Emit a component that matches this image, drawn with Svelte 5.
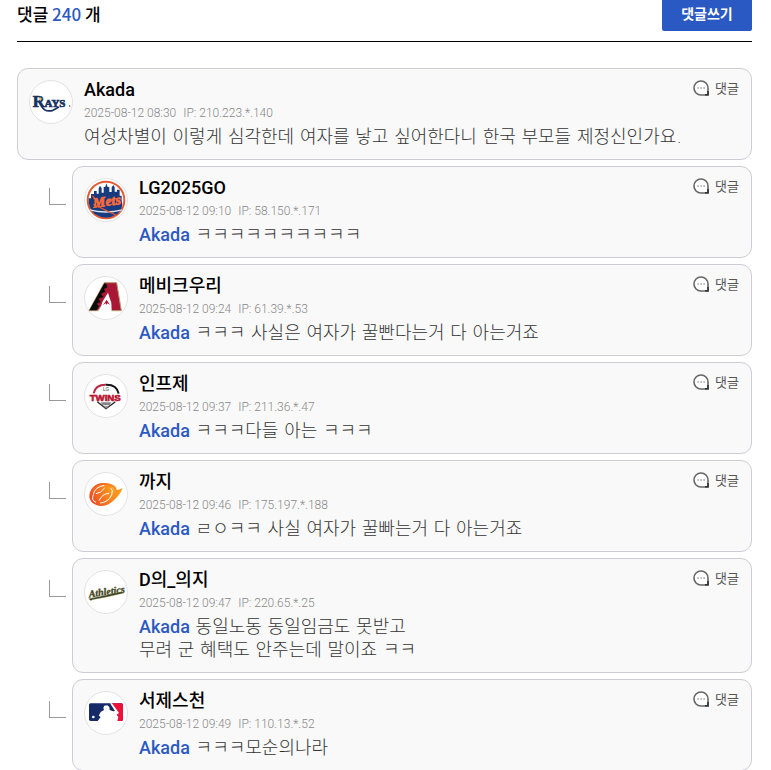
<script lang="ts">
  type Comment = {
    name: string
    date: string
    ip: string
    team: string
    to?: string
    lines: string[]
  }

  const total = 240

  const comments: Comment[] = [
    { name: 'Akada', date: '2025-08-12 08:30', ip: '210.223.*.140', team: 'rays', lines: ['여성차별이 이렇게 심각한데 여자를 낳고 싶어한다니 한국 부모들 제정신인가요.'] },
    { name: 'LG2025GO', date: '2025-08-12 09:10', ip: '58.150.*.171', team: 'mets', to: 'Akada', lines: ['ㅋㅋㅋㅋㅋㅋㅋㅋㅋㅋ'] },
    { name: '메비크우리', date: '2025-08-12 09:24', ip: '61.39.*.53', team: 'dbacks', to: 'Akada', lines: ['ㅋㅋㅋ 사실은 여자가 꿀빤다는거 다 아는거죠'] },
    { name: '인프제', date: '2025-08-12 09:37', ip: '211.36.*.47', team: 'twins', to: 'Akada', lines: ['ㅋㅋㅋ다들 아는 ㅋㅋㅋ'] },
    { name: '까지', date: '2025-08-12 09:46', ip: '175.197.*.188', team: 'ball', to: 'Akada', lines: ['ㄹㅇㅋㅋ 사실 여자가 꿀빠는거 다 아는거죠'] },
    { name: 'D의_의지', date: '2025-08-12 09:47', ip: '220.65.*.25', team: 'athletics', to: 'Akada', lines: ['동일노동 동일임금도 못받고', '무려 군 혜택도 안주는데 말이죠 ㅋㅋ'] },
    { name: '서제스천', date: '2025-08-12 09:49', ip: '110.13.*.52', team: 'mlb', to: 'Akada', lines: ['ㅋㅋㅋ모순의나라'] }
  ]
</script>

{#snippet logo(team: string)}
  <svg class="avatar" viewBox="0 0 132 132" role="img" aria-label={team}>
    <circle cx="66" cy="66" r="64.5" fill="#fff" stroke="#e2e2e4" stroke-width="3" />
    {#if team === 'rays'}
      <path d="M38 79 Q48 98 72 91 L90 81" fill="none" stroke="#16315f" stroke-width="5" />
      <text class="rays" x="11" y="80" font-family="Liberation Serif, serif" font-weight="bold" font-size="49" fill="#16315f" stroke="#16315f" stroke-width="2">Rays</text>
      <circle cx="122" cy="78" r="2" fill="#16315f" />
      <path d="M33 50 l3 5 5 1 -5 3 -2 5 -2 -5 -5 -2 5 -2z" fill="#e7bc55" />
    {:else if team === 'mets'}
      <circle cx="66" cy="66" r="55" fill="#fff" stroke="#e65a31" stroke-width="6" />
      <path d="M14 61h7V48h9v-9h8v8h6V31l4-8 5 8v13h6V27h5l3-11 4 11h5v15h7V28l5-7 4 7v13h7v-6h8v18h6v13Q120 91 100 108 Q66 130 32 108 Q12 90 14 61z" fill="#183a7e" />
      <path d="M17 94 Q65 106 115 94 L112 98 Q65 110 20 98z" fill="#dce5f0" />
      <path d="M28 79 L95 111 M25 53 L35 64" fill="none" stroke="#e65a31" stroke-width="4" />
      <text x="26" y="84" transform="rotate(-8 66 66)" font-family="Liberation Serif, serif" font-size="42" font-style="italic" font-weight="bold" fill="#ff6b37" stroke="#ff6b37" stroke-width="2">Mets</text>
    {:else if team === 'dbacks'}
      <path d="M61 20 H98 L112 104 H80 L79 92 Q65 106 50 92 L42 104 H15z" fill="#a91735" stroke="#b29c6d" stroke-width="3" />
      <path d="M61 22 L16 103 H37 L45 91 38 83 50 78 43 68 58 63 51 53 64 47 60 39 70 34 67 24z" fill="#090d0b" />
      <path d="M72 50 L77 66 82 80 83 106 H46 L56 76z" fill="#fff" />
      <path d="M68 71 l10 16-8-5-2 5-3-5-8 5z" fill="#ab1836" />
    {:else if team === 'twins'}
      <path d="M29 58 Q34 32 65 32" fill="none" stroke="#bd2540" stroke-width="6" />
      <path d="M65 32 Q99 31 104 59" fill="none" stroke="#171719" stroke-width="6" />
      <path d="M40 83 L66 104 94 83" fill="none" stroke="#222" stroke-width="4" />
      <path d="M50 85h32l-5 9H56z M58 97h17l-9 7z" fill="#858589" />
      <text x="57" y="52" font-family="Liberation Sans, sans-serif" font-size="14" fill="#444">LG</text>
      <text x="17" y="80" font-family="Liberation Sans, sans-serif" font-size="29" font-weight="bold" fill="#b91532" stroke="#b91532" stroke-width="2">TWINS</text>
    {:else if team === 'ball'}
      <defs>
        <linearGradient id="orange" x2="1"><stop stop-color="#ef4924" /><stop offset="1" stop-color="#fca51d" /></linearGradient>
      </defs>
      <ellipse cx="54" cy="67" rx="39" ry="33" transform="rotate(-25 54 67)" fill="url(#orange)" />
      <path d="M27 46 Q47 28 78 35 Q98 41 98 54 Q109 53 116 48 Q108 70 87 87 Q68 106 38 101 Q72 99 87 71 Q99 48 79 42 Q54 33 27 46z" fill="url(#orange)" />
      <path d="M28 68 Q32 45 61 40 M81 49 Q88 54 83 69 Q73 91 48 93 M28 69 Q21 85 36 91" fill="none" stroke="#fff" stroke-width="3" />
      <path d="M36 65 Q50 64 62 48 M45 86 Q55 65 75 64" fill="none" stroke="#fff" stroke-width="3" />
    {:else if team === 'athletics'}
      <text x="14" y="75" transform="rotate(-8 66 66)" font-family="Liberation Serif, serif" font-size="30" font-style="italic" font-weight="bold" fill="#42451c" stroke="#42451c" stroke-width="1">Athletics</text>
      <path d="M14 86 Q67 76 113 65 L120 69 Q68 82 24 89 L21 92z" fill="#303c2b" stroke="#b6a845" stroke-width="1" />
    {:else}
      <rect x="15" y="37" width="102" height="53" rx="5" fill="#162a68" />
      <path d="M83 37h28q6 0 6 6v42q0 5-6 5H98l4-12z" fill="#ed123b" />
      <path d="M78 37 H84 L105 66 98 71 103 78 100 90 H41 L50 78 44 74 50 63 60 57 58 50 61 44 70 43 76 48 77 57 87 61 93 60z" fill="#fff" />
      <circle cx="28" cy="78" r="4" fill="#fff" />
    {/if}
  </svg>
{/snippet}

<section class="comments">
  <header>
    <h2>댓글 <span>{total}</span> 개</h2>
    <button class="write" type="button">댓글쓰기</button>
  </header>

  <ul>
    {#each comments as comment}
      <li class:child={comment.to}>
        {#if comment.to}
          <span class="branch"></span>
        {/if}
        <article>
          {@render logo(comment.team)}
          <div class="body">
            <div class="top">
              <h3>{comment.name}</h3>
              <button class="reply" type="button">
                <svg viewBox="0 0 16 16" aria-hidden="true">
                  <path d="M8 1a7 7 0 1 0 0 14h7V8a7 7 0 0 0-7-7z" fill="#fff" stroke="#666" stroke-width="1.6" />
                  <path d="M12 14.8h3V11" fill="none" stroke="#333" stroke-width="1.6" />
                  <path d="M4.5 8h1.2M7.5 8h1.2M10.5 8h1.2" stroke="#888" stroke-width="1.3" />
                </svg>
                댓글
              </button>
            </div>
            <p class="meta"><span>{comment.date}</span><span>IP: {comment.ip}</span></p>
            <p class="text">
              {#if comment.to}<a href="#{comment.to}">{comment.to}</a>{/if}
              {#each comment.lines as line, i}{#if i > 0}<br />{/if}{line}{/each}
            </p>
          </div>
        </article>
      </li>
    {/each}
  </ul>
</section>

<style>
  :global(body) {
    margin: 0;
    background: #fff;
  }

  .comments {
    padding: 0 19px 0 17px;
    color: #000;
    font-family: "Noto Sans CJK KR", sans-serif;
  }

  header {
    display: flex;
    justify-content: space-between;
    padding-bottom: 10px;
    border-bottom: 1px solid #000;
  }

  h2, h3, p, ul {
    margin: 0;
    padding: 0;
  }

  h2 {
    font-size: 17px;
    font-weight: 500;
    line-height: 27px;
  }

  h2 span {
    color: #2d59c3;
  }

  button {
    border: 0;
    font-family: inherit;
    cursor: pointer;
  }

  .write {
    width: 90px;
    height: 31px;
    padding: 0 0 4px;
    border-radius: 0 0 2px 2px;
    background: #2b59c3;
    color: #fff;
    font-size: 14px;
    font-weight: 700;
    line-height: 27px;
  }

  ul {
    display: flex;
    flex-direction: column;
    gap: 6px;
    padding-top: 26px;
    list-style: none;
  }

  li {
    display: flex;
    gap: 6px;
  }

  .child {
    padding-left: 32px;
  }

  .branch {
    flex: none;
    box-sizing: border-box;
    width: 17px;
    height: 17px;
    margin-top: 22px;
    border: solid #999;
    border-width: 0 0 1px 1px;
  }

  article {
    flex: 1;
    display: flex;
    gap: 11px;
    min-width: 0;
    padding: 11px;
    border: 1px solid #cdcdd6;
    border-radius: 11px;
    background: #f9f9f9;
  }

  .avatar {
    flex: none;
    width: 44px;
    height: 44px;
  }

  .rays {
    font-variant: small-caps;
  }

  .body {
    flex: 1;
    min-width: 0;
  }

  .top {
    display: flex;
    justify-content: space-between;
  }

  h3 {
    font-family: Roboto, "Noto Sans CJK KR", sans-serif;
    font-size: 18px;
    font-weight: 500;
    line-height: 20px;
  }

  .reply {
    display: flex;
    align-items: center;
    gap: 6px;
    height: 16px;
    padding: 0 1px 0 0;
    background: none;
    color: #555;
    font-size: 13px;
    line-height: 16px;
  }

  .reply svg {
    width: 16px;
    height: 16px;
  }

  .meta {
    display: flex;
    gap: 7px;
    padding-top: 2px;
    color: #888;
    font-family: Roboto, sans-serif;
    font-size: 12px;
    font-weight: 300;
    line-height: 23px;
  }

  .text {
    color: #333;
    font-family: "DejaVu Sans", "Noto Sans CJK KR", sans-serif;
    font-size: 18px;
    font-weight: 300;
    line-height: 23px;
  }

  .text a {
    color: #2d59c3;
    font-family: Roboto, sans-serif;
    font-weight: 500;
    text-decoration: none;
  }
</style>
